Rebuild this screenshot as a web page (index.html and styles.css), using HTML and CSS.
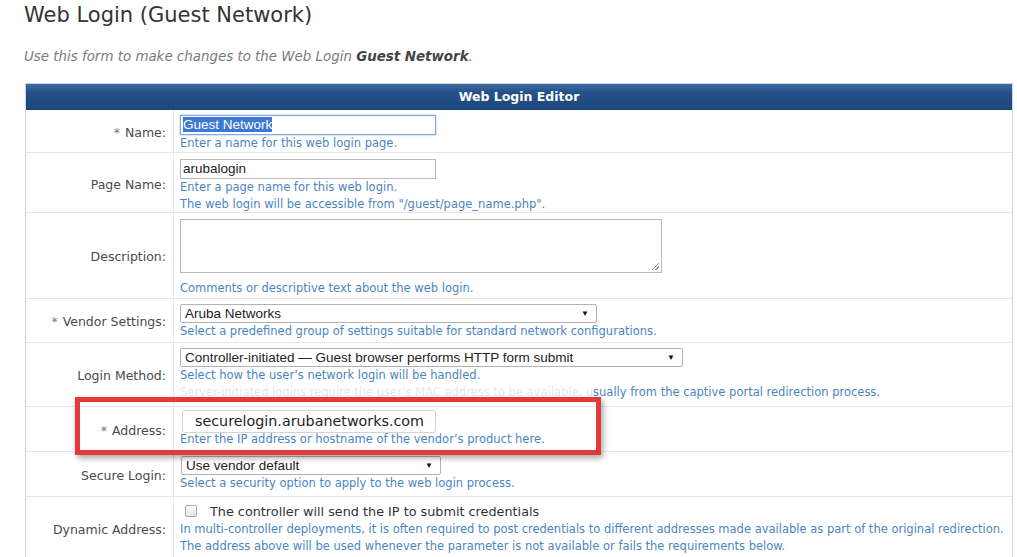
FILE: index.html
```html
<!DOCTYPE html>
<html>
<head>
<meta charset="utf-8">
<title>Web Login (Guest Network)</title>
<link rel="stylesheet" href="styles.css">
</head>
<body>
<div class="page">
  <h1 class="title">Web Login (Guest Network)</h1>
  <p class="intro">Use this form to make changes to the Web Login <b>Guest Network</b>.</p>

  <div class="editor">
    <div class="editor-head">Web Login Editor</div>

    <div class="row row-name">
      <div class="label"><span class="req">*</span> Name:</div>
      <div class="field">
        <div class="input input-focus"><span class="sel">Guest Network</span></div>
        <div class="hint">Enter a name for this web login page.</div>
      </div>
    </div>

    <div class="row row-page">
      <div class="label">Page Name:</div>
      <div class="field">
        <div class="input">arubalogin</div>
        <div class="hint">Enter a page name for this web login.<br>The web login will be accessible from "/guest/page_name.php".</div>
      </div>
    </div>

    <div class="row row-desc">
      <div class="label">Description:</div>
      <div class="field">
        <div class="textarea"><span class="grip"></span></div>
        <div class="hint hint-desc">Comments or descriptive text about the web login.</div>
      </div>
    </div>

    <div class="row row-vendor">
      <div class="label"><span class="req">*</span> Vendor Settings:</div>
      <div class="field">
        <div class="select select-vendor"><span>Aruba Networks</span><span class="caret">&#9660;</span></div>
        <div class="hint">Select a predefined group of settings suitable for standard network configurations.</div>
      </div>
    </div>

    <div class="row row-login">
      <div class="label">Login Method:</div>
      <div class="field">
        <div class="select select-login"><span>Controller-initiated — Guest browser performs HTTP form submit</span><span class="caret">&#9660;</span></div>
        <div class="hint">Select how the user’s network login will be handled.<br><span class="faded">Server-initiated logins require the user’s MAC address to be available, u</span>sually from the captive portal redirection process.</div>
      </div>
    </div>

    <div class="row row-address">
      <div class="label"><span class="req">*</span> Address:</div>
      <div class="field">
        <div class="input input-address">securelogin.arubanetworks.com</div>
        <div class="hint">Enter the IP address or hostname of the vendor’s product here.</div>
      </div>
    </div>

    <div class="row row-secure">
      <div class="label">Secure Login:</div>
      <div class="field">
        <div class="select select-secure"><span>Use vendor default</span><span class="caret">&#9660;</span></div>
        <div class="hint">Select a security option to apply to the web login process.</div>
      </div>
    </div>

    <div class="row row-dynamic">
      <div class="label">Dynamic Address:</div>
      <div class="field">
        <div class="check-line"><span class="checkbox"></span><span>The controller will send the IP to submit credentials</span></div>
        <div class="hint hint-dyn">In multi-controller deployments, it is often required to post credentials to different addresses made available as part of the original redirection.<br>The address above will be used whenever the parameter is not available or fails the requirements below.</div>
      </div>
    </div>

    <div class="callout"></div>
  </div>
</div>
</body>
</html>
```

FILE: styles.css
```css
html, body {
  margin: 0;
  padding: 0;
  background: #ffffff;
}

body {
  width: 1017px;
  height: 557px;
  overflow: hidden;
  font-family: "DejaVu Sans", Verdana, sans-serif;
  color: #444;
}

.page {
  padding: 0 0 0 24px;
}

.title {
  margin: 0;
  padding-top: 1px;
  font-size: 21px;
  line-height: 28px;
  font-weight: normal;
  color: #333;
}

.intro {
  margin: 19px 0 0 0;
  font-size: 13.4px;
  line-height: 18px;
  font-style: italic;
  color: #7a7a7a;
}

.intro b {
  color: #444;
}

.editor {
  position: relative;
  margin: 17px 0 0 1px;
  width: 988px;
  border: 1px solid #cbd6e3;
  box-sizing: border-box;
}

.editor-head {
  height: 26px;
  line-height: 25px;
  text-align: center;
  color: #fff;
  font-weight: bold;
  font-size: 12.5px;
  background: linear-gradient(#3d6a9f 0%, #24508a 35%, #1c467c 100%);
}

.row {
  display: grid;
  grid-template-columns: 148px 1fr;
  border-bottom: 1px solid #e0e7ef;
  box-sizing: border-box;
}

.row-name { height: 43px; }
.row-page { height: 60px; }
.row-desc { height: 86px; }
.row-vendor { height: 44px; }
.row-login { height: 64px; }
.row-address { height: 45px; }
.row-secure { height: 45px; }
.row-dynamic { height: 62px; border-bottom: none; }

.label {
  display: flex;
  align-items: center;
  justify-content: flex-end;
  padding: 2px 7px 0 0;
  border-right: 1px solid #e3e9f0;
  font-size: 12.5px;
  color: #4a4a4a;
  white-space: nowrap;
}

.req {
  color: #777;
  margin-right: 5px;
}

.field {
  padding: 5px 0 0 6px;
  min-width: 0;
}

.row-page .field,
.row-desc .field { padding-top: 6px; }
.row-address .field { padding-top: 3px; }
.row-secure .field { padding-top: 4px; }
.row-dynamic .field { padding-top: 5px; }

.hint {
  font-size: 11.5px;
  line-height: 17px;
  color: #4a85c4;
  white-space: nowrap;
}

.hint-desc {
  margin-top: 7px;
}

.faded {
  opacity: 0.18;
}

.input {
  box-sizing: border-box;
  width: 256px;
  height: 20px;
  border: 1px solid #b9b9b9;
  font-family: "Liberation Sans", Arial, sans-serif;
  font-size: 13.5px;
  line-height: 18px;
  color: #222;
  padding: 0 2px;
  background: #fff;
}

.input-focus {
  border-color: #7fa9da;
  box-shadow: 0 0 2px rgba(90, 140, 210, 0.6);
}

.sel {
  background: #3d78d4;
  color: #fff;
}

.input-address {
  margin-left: 2px;
  width: 254px;
  height: 23px;
  border-color: #d4d4d4;
  border-radius: 3px;
  font-family: "DejaVu Sans", Verdana, sans-serif;
  font-size: 14.3px;
  line-height: 21px;
  padding-left: 12px;
  color: #1e1e1e;
}

.row-address .hint {
  margin-top: -1px;
  line-height: 15px;
}

.textarea {
  position: relative;
  box-sizing: border-box;
  width: 482px;
  height: 54px;
  border: 1px solid #b9b9b9;
  background: #fff;
}

.grip {
  position: absolute;
  right: 2px;
  bottom: 2px;
  width: 7px;
  height: 7px;
  background: linear-gradient(135deg, transparent 45%, #999 45%, #999 55%, transparent 55%, transparent 70%, #999 70%, #999 80%, transparent 80%);
}

.select {
  box-sizing: border-box;
  display: flex;
  justify-content: space-between;
  align-items: center;
  height: 19px;
  border: 1px solid #b3b3b3;
  border-radius: 2px;
  background: #fff;
  font-family: "Liberation Sans", Arial, sans-serif;
  font-size: 13.5px;
  color: #222;
  padding: 0 7px 0 4px;
  white-space: nowrap;
}

.select-vendor { width: 417px; }
.select-login { width: 503px; }
.select-secure { width: 260px; }

.row-secure .select { margin-left: 1px; }

.caret {
  font-size: 8px;
  color: #111;
}

.check-line {
  display: flex;
  align-items: center;
  height: 18px;
  font-size: 12.8px;
  color: #333;
}

.checkbox {
  box-sizing: border-box;
  width: 12px;
  height: 12px;
  margin: 0 13px 0 5px;
  border: 1px solid #a9a9a9;
  border-radius: 2px;
  background: linear-gradient(#fdfdfd, #e4e4e4);
}

.hint-dyn {
  margin-top: 1px;
}

.callout {
  position: absolute;
  left: 49px;
  top: 313px;
  width: 526px;
  height: 58px;
  box-sizing: border-box;
  border: 5px solid #e5383b;
  box-shadow: 2px 3px 6px rgba(0, 0, 0, 0.35);
  pointer-events: none;
}
```
